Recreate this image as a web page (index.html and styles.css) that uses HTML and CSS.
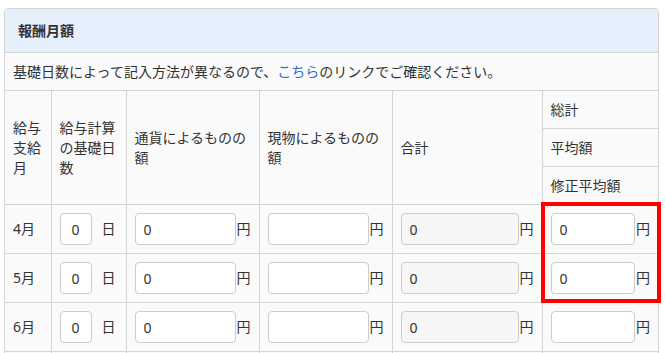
FILE: index.html
```html
<!DOCTYPE html>
<html lang="ja">
<head>
  <meta charset="UTF-8" />
  <meta name="viewport" content="width=device-width, initial-scale=1" />
  <title>報酬月額</title>
  <link rel="stylesheet" href="styles.css">
</head>
<body>
  <div class="card">
    <div class="card-head">報酬月額</div>
    <div class="note">基礎日数によって記入方法が異なるので、<a href="#">こちら</a>のリンクでご確認ください。</div>

    <table class="tabla">
      <colgroup>
        <col class="c-mes" />
        <col class="c-dias" />
        <col class="c-monto" />
        <col class="c-monto" />
        <col class="c-total" />
        <col class="c-prom" />
      </colgroup>
      <thead>
        <tr>
          <th rowspan="3">給与支給月</th>
          <th rowspan="3">給与計算の基礎日数</th>
          <th rowspan="3">通貨によるものの額</th>
          <th rowspan="3">現物によるものの額</th>
          <th rowspan="3">合計</th>
          <th class="sub">総計</th>
        </tr>
        <tr><th class="sub">平均額</th></tr>
        <tr><th class="sub">修正平均額</th></tr>
      </thead>
      <tbody>
        <tr>
          <td>4月</td>
          <td><div class="campo"><input class="dias" value="0" /><span class="dia">日</span></div></td>
          <td><div class="campo"><input value="0" /><span>円</span></div></td>
          <td><div class="campo"><input value="" /><span>円</span></div></td>
          <td><div class="campo"><input class="fijo" value="0" readonly /><span>円</span></div></td>
          <td><div class="campo"><input value="0" /><span>円</span></div></td>
        </tr>
        <tr>
          <td>5月</td>
          <td><div class="campo"><input class="dias" value="0" /><span class="dia">日</span></div></td>
          <td><div class="campo"><input value="0" /><span>円</span></div></td>
          <td><div class="campo"><input value="" /><span>円</span></div></td>
          <td><div class="campo"><input class="fijo" value="0" readonly /><span>円</span></div></td>
          <td><div class="campo"><input value="0" /><span>円</span></div></td>
        </tr>
        <tr>
          <td>6月</td>
          <td><div class="campo"><input class="dias" value="0" /><span class="dia">日</span></div></td>
          <td><div class="campo"><input value="0" /><span>円</span></div></td>
          <td><div class="campo"><input value="" /><span>円</span></div></td>
          <td><div class="campo"><input class="fijo" value="0" readonly /><span>円</span></div></td>
          <td><div class="campo"><input value="" /><span>円</span></div></td>
        </tr>
        <tr>
          <td></td><td></td><td></td><td></td><td></td><td></td>
        </tr>
      </tbody>
    </table>

    <div class="marca"></div>
  </div>
</body>
</html>
```

FILE: styles.css
```css
body { margin: 0; padding: 0; background: #fff; font-family: "Noto Sans", "Noto Sans CJK JP", sans-serif; font-size: 14px; color: #333; }
.card { position: relative; margin: 8px 0 0 4px; width: 655px; box-sizing: border-box; border: 1px solid #d4d4d4; border-radius: 4px; background: #fafafa; }
.card-head { height: 43px; line-height: 43px; padding: 0 13px; background: #e6f0fc; border-bottom: 1px solid #d4d4d4; border-radius: 4px 4px 0 0; font-weight: bold; font-size: 14px; }
.note { height: 37px; line-height: 37px; padding: 0 8px; border-bottom: 1px solid #d4d4d4; }
.note a { color: #2b6fcf; text-decoration: none; }
.tabla { width: 100%; border-collapse: collapse; border-style: hidden; table-layout: fixed; }
.c-mes { width: 46px; }
.c-dias { width: 75px; }
.c-monto { width: 133px; }
.c-total { width: 150px; }
.c-prom { width: 116px; }
.tabla th, .tabla td { border: 1px solid #d4d4d4; padding: 8px; text-align: left; vertical-align: middle; font-weight: normal; line-height: 20px; }
.tabla th.sub { height: 21px; }
.tabla td { height: 32px; }
.campo { display: flex; align-items: center; gap: 1px; }
.campo input { flex: 1; min-width: 0; height: 32px; box-sizing: border-box; padding: 0 8px; border: 1px solid #ccc; border-radius: 4px; background: #fff; font: inherit; color: #333; }
.campo input.dias { flex: none; width: 32px; padding: 0; text-align: center; }
.campo input.fijo { background: #f6f6f6; }
.campo .dia { margin-left: 9px; }
.marca { position: absolute; left: 536px; top: 193px; width: 120px; height: 101px; box-sizing: border-box; border: 4px solid #f00; }
```
